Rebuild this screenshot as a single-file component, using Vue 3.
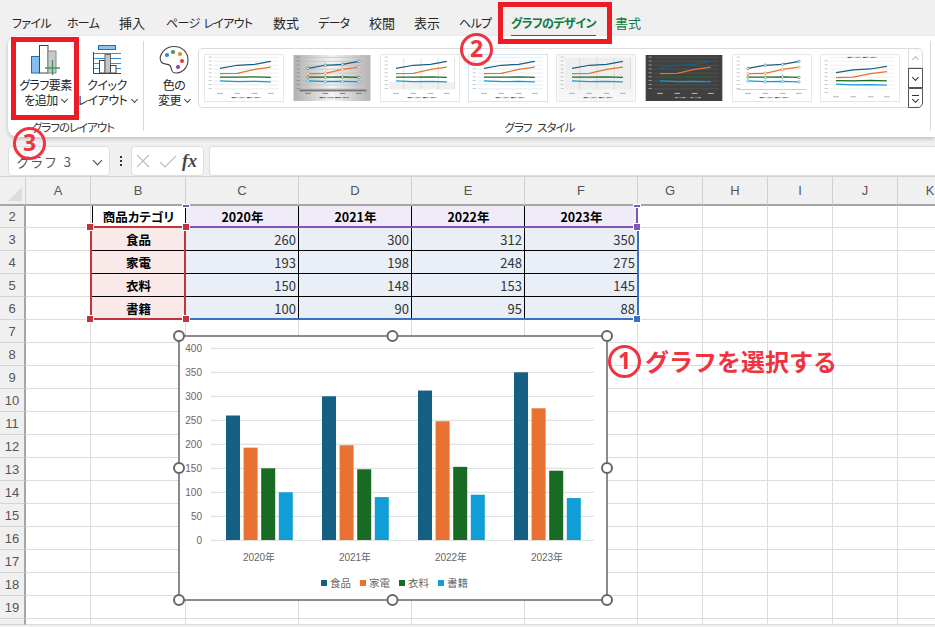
<template>
  <div class="app">
    <nav class="tabs">
      <span v-for="t in tabs" :key="t" class="tab" :class="{ active: t === 'グラフのデザイン', green: t === '書式', kana: isKana(t) }">{{ t }}</span>
    </nav>

    <section class="ribbon">
      <div class="group layout-group">
        <div class="btn-row">
          <button class="rb add-btn">
            <svg class="rb-icon" width="32" height="32" viewBox="33 43 32 32">
              <rect x="34.5" y="56.5" width="8" height="16.5" fill="#85bdec" stroke="#1f6fb5" />
              <rect x="42.5" y="45.5" width="8.5" height="27.5" fill="#fff" stroke="#444" />
              <rect x="51" y="51" width="8" height="22" fill="#c8c8c8" stroke="#888" />
              <path d="M55.5 60v15M48 68h15" stroke="#3f9a58" stroke-width="1.4" fill="none" />
            </svg>
            <span>グラフ要素</span>
            <span>を追加 <i class="caret"></i></span>
          </button>
          <button class="rb quick-btn">
            <svg class="rb-icon" width="30" height="32" viewBox="91 43 30 32">
              <rect x="97.5" y="45.5" width="17" height="4" fill="#8fc3ee" stroke="#1f6fb5" />
              <path d="M92 53.5h28M92 58.5h28M92 63.5h28M92 68.5h28" stroke="#2f8fdc" fill="none" />
              <rect x="98.5" y="60.5" width="5.5" height="12.5" fill="#fff" stroke="#444" />
              <rect x="104" y="54.5" width="5.5" height="18.5" fill="#c4c4c4" stroke="#666" />
              <rect x="109.5" y="65.5" width="5.5" height="7.5" fill="#fff" stroke="#444" />
              <path d="M92.5 52v21.5H120" stroke="#444" fill="none" />
            </svg>
            <span>クイック</span>
            <span>レイアウト <i class="caret"></i></span>
          </button>
        </div>
        <div class="group-label">グラフのレイアウト</div>
      </div>

      <div class="group style-group">
        <div class="btn-row">
          <button class="rb color-btn">
            <svg class="rb-icon" width="32" height="32" viewBox="158 43 32 32">
              <path d="M174 46.5C183 46.5 188 53 188 60C188 68 182 73 176 73C170 73 172.500 68 170 65.500C167.500 63 163 65.500 161 61.500C158 55 165 46.500 174 46.500Z" fill="#fff" stroke="#444" stroke-width="1.1" />
              <circle cx="167" cy="55" r="2.100" fill="#2b88d8" />
              <circle cx="173" cy="52" r="2.100" fill="#3f9a58" />
              <circle cx="180" cy="54" r="2.100" fill="#e98a1f" />
              <circle cx="182" cy="61" r="2.100" fill="#e0403a" />
              <circle cx="178" cy="67" r="2.100" fill="#8a44ad" />
            </svg>
            <span>色の</span>
            <span>変更 <i class="caret"></i></span>
          </button>
          <div class="gallery">
            <svg v-for="(th, i) in thumbs" :key="i" class="thumb" :class="th.kind" width="80" height="48" viewBox="0 0 80 48">
              <defs>
                <linearGradient :id="'g' + i" x1="0" y1="0" x2="1" y2="0">
                  <stop offset="0" stop-color="#b0b0b0" />
                  <stop offset="0.5" stop-color="#f4f4f4" />
                  <stop offset="1" stop-color="#b4b4b4" />
                </linearGradient>
                <pattern :id="'h' + i" width="3" height="3" patternUnits="userSpaceOnUse">
                  <path d="M0 3L3 0" stroke="#cfcfcf" stroke-width="0.600" />
                </pattern>
              </defs>
              <rect width="80" height="48" :fill="th.bg" />
              <rect v-if="th.kind === 'gradient'" width="80" height="48" :fill="'url(#g' + i + ')'" />
              <rect v-if="th.kind === 'hatch'" x="8" y="3" width="68" height="33" :fill="'url(#h' + i + ')'" />
              <rect v-if="th.kind === 'soft'" x="8" y="28" width="68" height="8" fill="#f0f0f0" />
              <template v-if="th.kind !== 'labels'">
                <line v-for="y in th.grid" :key="y" x1="8" x2="76" :y1="y" :y2="y" :stroke="th.gridColor" stroke-width="0.700" />
              </template>
              <line v-if="th.kind === 'labels'" x1="4" x2="76" y1="36" y2="36" stroke="#ccc" />
              <rect v-if="th.kind === 'gradient'" x="6" y="36" width="70" height="2" fill="#777" />
              <template v-if="th.kind === 'soft' || th.kind === 'hatch'">
                <line v-for="x in thumbX" :key="x" :x1="x + 8" :x2="x + 8" y1="3" y2="36" stroke="#ccc" stroke-width="0.600" />
              </template>
              <polyline v-for="l in th.lines" :key="l.color" :points="l.points" :stroke="l.color" fill="none" stroke-width="1.300" />
              <template v-if="th.markers">
                <template v-for="l in th.lines" :key="l.color">
                  <circle v-for="p in l.pts" :key="p[0]" :cx="p[0]" :cy="p[1]" r="1.300" fill="#fff" :stroke="l.color" stroke-width="0.600" />
                </template>
              </template>
              <rect v-for="x in thumbX" :key="x" :x="x - 3 + th.dx" :y="th.top ? 43 : 39.500" width="6" height="1.200" :fill="th.tick" />
              <rect v-for="k in 9" :key="k" x="3" :y="1.800 + (k - 1) * 4.100 + th.dy" width="3.500" height="0.800" :fill="th.tick" />
              <g v-for="(c, k) in seriesColors" :key="c">
                <rect :x="27 + k * 8" :y="th.top ? 2 : 44" width="4" height="1" :fill="c" />
                <rect :x="31 + k * 8" :y="th.top ? 1.800 : 43.800" width="2.500" height="1.200" :fill="th.tick" />
              </g>
            </svg>
            <div class="scroll">
              <span class="sc up"><i class="chev"></i></span>
              <span class="sc dark"><i class="chev"></i></span>
              <span class="sc dark more"><i class="bar"></i><i class="chev"></i></span>
            </div>
          </div>
        </div>
        <div class="group-label">グラフ スタイル</div>
      </div>
      <div class="end-line"></div>
    </section>

    <div class="formula-bar">
      <div class="name-box"><span>グラフ 3</span><i class="chev big"></i></div>
      <div class="dots"><i></i><i></i><i></i></div>
      <div class="fx-box">
        <svg width="48" height="20" viewBox="0 0 48 20">
          <path d="M3 4L15 16M15 4L3 16M26 11L31 16L42 5" stroke="#bdbdbd" stroke-width="1.100" fill="none" />
        </svg>
        <em>fx</em>
      </div>
      <div class="input"></div>
    </div>

    <main class="sheet">
      <div class="grid">
        <div class="head corner"><i></i></div>
        <div v-for="c in columns" :key="c" class="head">{{ c }}</div>
        <template v-for="row in rows" :key="row.n">
          <div class="row-no">{{ row.n }}</div>
          <div v-for="cell in row.cells" :key="cell.key" class="cell" :class="cell.cls">{{ cell.text }}</div>
        </template>
      </div>

      <div class="range red-range"></div>
      <div class="range purple-range"></div>
      <div class="range blue-range"></div>
      <i class="hd red h1"></i><i class="hd red h2"></i><i class="hd red h3"></i><i class="hd red h4"></i>
      <i class="hd purple h5"></i><i class="hd purple h6"></i><i class="hd purple h7"></i><i class="hd blue h8"></i>

      <svg class="chart" width="446" height="283" viewBox="170 327 446 283">
        <rect x="179" y="336" width="428" height="264" fill="#fff" stroke="#666" stroke-width="1.500" />
        <g v-for="t in ticks" :key="t">
          <line x1="211" x2="594" :y1="yOf(t)" :y2="yOf(t)" stroke="#d9d9d9" />
          <text class="tick" x="202" :y="yOf(t) + 3.500" text-anchor="end">{{ t }}</text>
        </g>
        <g v-for="(yr, yi) in years" :key="yr">
          <rect v-for="(s, si) in series" :key="s.name"
            :x="226 + yi * 96 + si * 17.600" :y="yOf(s.values[yi])" width="14"
            :height="540 - yOf(s.values[yi])" :fill="s.color" />
          <text class="cat" :x="259 + yi * 96" y="561" text-anchor="middle">{{ yr }}</text>
        </g>
        <g v-for="(s, si) in series" :key="s.name + 'l'">
          <rect :x="321 + si * 39" y="580" width="6" height="6" :fill="s.color" />
          <text class="leg" :x="330 + si * 39" y="587">{{ s.name }}</text>
        </g>
        <circle v-for="(h, i) in handles" :key="i" :cx="h[0]" :cy="h[1]" r="5" fill="#fff" stroke="#666" stroke-width="2" />
      </svg>
    </main>

    <div class="frame frame-add"></div>
    <div class="frame frame-tab"></div>
    <div class="num n1">1</div>
    <div class="num n2">2</div>
    <div class="num n3">3</div>
    <div class="note">グラフを選択する</div>
  </div>
</template>

<script setup>
const tabs = ['ファイル', 'ホーム', '挿入', 'ページ レイアウト', '数式', 'データ', '校閲', '表示', 'ヘルプ', 'グラフのデザイン', '書式']
const isKana = t => /[ァ-ヶー]/.test(t)
const columns = ['A', 'B', 'C', 'D', 'E', 'F', 'G', 'H', 'I', 'J', 'K']
const years = ['2020年', '2021年', '2022年', '2023年']
const series = [
  { name: '食品', color: '#156082', values: [260, 300, 312, 350] },
  { name: '家電', color: '#e97132', values: [193, 198, 248, 275] },
  { name: '衣料', color: '#196b24', values: [150, 148, 153, 145] },
  { name: '書籍', color: '#0f9ed5', values: [100, 90, 95, 88] }
]
const seriesColors = series.map(s => s.color)
const ticks = [400, 350, 300, 250, 200, 150, 100, 50, 0]
const yOf = v => 540.3 - v * 0.48

const handles = [[179, 336], [392.5, 336], [607, 336], [179, 468], [607, 468], [179, 600], [392.5, 600], [607, 600]]

// small preview charts in the style gallery
const thumbX = [15, 33, 51, 68]
const makeLines = (base = 35.3, scale = 0.082) =>
  series.map(s => {
    const pts = s.values.map((v, i) => [thumbX[i], +(base - v * scale).toFixed(1)])
    return { color: s.color, pts, points: pts.map(p => p.join(',')).join(' ') }
  })
const gridLines = Array.from({ length: 9 }, (_, i) => 2.5 + i * 4.1)

const thumb = (kind, bg, gridColor, extra = {}) => ({
  kind, bg, gridColor, grid: gridLines, lines: makeLines(extra.base, extra.scale),
  tick: '#bbb', markers: false, top: false, dx: 0, dy: 0, ...extra
})
const thumbs = [
  thumb('plain', '#fff', '#e4e4e4'),
  thumb('gradient', '#ddd', '#bdbdbd', { markers: true, tick: '#888' }),
  thumb('soft', '#fff', 'transparent'),
  thumb('blue', '#fff', '#d6e6f6'),
  thumb('hatch', '#f6f6f6', 'transparent'),
  thumb('dark', '#404040', '#585858', { tick: '#aaa' }),
  thumb('labels', '#fff', 'transparent', { markers: true }),
  thumb('top', '#fff', '#e8e8e8', { top: true, base: 38, scale: 0.075, dy: 4 })
]

// spreadsheet rows: row 2 is the header of the table, 3 to 6 the data
const rowNumbers = [2, 3, 4, 5, 6, 7, 8, 9, 10, 11, 12, 13, 14, 15, 16, 17, 18, 19, '']
const rows = rowNumbers.map(n => {
  const cells = []
  for (let c = 0; c < columns.length; c++) {
    let text = ''
    const cls = []
    if (n === 2 && c === 1) {
      text = '商品カテゴリ'
      cls.push('th', 'inner')
    } else if (n === 2 && c >= 2 && c <= 5) {
      text = years[c - 2]
      cls.push('th', 'th-year', 'inner')
    } else if (typeof n === 'number' && n >= 3 && n <= 6) {
      if (c === 1) {
        text = series[n - 3].name
        cls.push('th', 'th-row', 'inner', 'line')
      } else if (c >= 2 && c <= 5) {
        text = series[n - 3].values[c - 2]
        cls.push('num-cell', 'inner', 'line')
      }
    }
    cells.push({ key: n + '-' + c, text, cls })
  }
  return { n, cells }
})
</script>

<style>
html, body { margin: 0; background: #f0f0f0; }
</style>

<style scoped>
.app {
  position: relative;
  width: 935px;
  height: 627px;
  overflow: hidden;
  background: #f0f0f0;
  font-family: "Noto Sans CJK JP", "Noto Sans", sans-serif;
  font-feature-settings: "palt";
  color: #262626;
}

/* tab row */
.tabs {
  height: 36px;
  display: grid;
  grid-template-columns: 55px 52px 47px 107px 45px 51px 45px 45px 52px 104px auto;
  justify-items: start;
  align-items: center;
  padding: 9px 0 0 12px;
  box-sizing: border-box;
}
.tab {
  font-size: 13px;
  line-height: 18px;
  position: relative;
  white-space: nowrap;
}
.tab.kana {
  font-size: 12px;
  letter-spacing: -0.7px;
  word-spacing: 2px;
}
.tab.active, .tab.green { color: #0f7b41; }
.tab.active { font-weight: 700; letter-spacing: -0.6px; }
.tab.active::after {
  content: "";
  position: absolute;
  left: 0;
  right: 0;
  bottom: -5px;
  height: 2px;
  background: #0f7b41;
}

/* ribbon */
.ribbon {
  height: 101px;
  margin-left: 8px;
  display: flex;
  background: #fff;
  border-radius: 9px 0 0 9px;
  box-shadow: 0 2px 4px rgba(0, 0, 0, 0.2);
  position: relative;
}
.group {
  display: flex;
  flex-direction: column;
  position: relative;
}
.layout-group { width: 136px; }
.layout-group::after {
  content: "";
  position: absolute;
  right: 0;
  top: 5px;
  bottom: 6px;
  width: 1px;
  background: #d8d8d8;
}
.style-group { flex: 1; }
.btn-row {
  display: flex;
  height: 83px;
}
.group-label {
  font-size: 11.500px;
  line-height: 16px;
  text-align: center;
  color: #333;
  letter-spacing: -1px;
  word-spacing: 4px;
}
.layout-group .group-label { padding-right: 6px; }
.rb {
  border: 0;
  background: none;
  padding: 7px 0 0;
  margin: 0;
  font: inherit;
  font-size: 12px;
  line-height: 14.500px;
  letter-spacing: -0.5px;
  color: #262626;
  display: flex;
  flex-direction: column;
  align-items: center;
  white-space: nowrap;
}
.rb-icon { margin-bottom: 3px; }
.add-btn { width: 67px; margin-left: 4px; }
.quick-btn { width: 56px; }
.color-btn { width: 54px; padding-left: 6px; }
.caret {
  display: inline-block;
  width: 4px;
  height: 4px;
  margin: 0 0 3px 2px;
  border-right: 1px solid #444;
  border-bottom: 1px solid #444;
  transform: rotate(45deg);
}
.gallery {
  margin-top: 12px;
  height: 60px;
  width: 721px;
  box-sizing: border-box;
  border: 1px solid #dcdcdc;
  border-right: 0;
  border-radius: 5px;
  display: flex;
  align-items: center;
  gap: 8px;
  padding-left: 5px;
}
.thumb {
  flex: none;
  box-sizing: border-box;
  border: 1px solid #e6e6e6;
}
.thumb.blue { border-color: #d4e4f5; }
.thumb.gradient, .thumb.dark { border-color: transparent; }
.scroll {
  width: 15px;
  height: 60px;
  margin-left: auto;
  display: flex;
  flex-direction: column;
  flex: none;
}
.sc {
  flex: 1;
  box-sizing: border-box;
  border: 1px solid #dcdcdc;
  display: flex;
  flex-direction: column;
  align-items: center;
  justify-content: center;
}
.sc.up { border-radius: 0 5px 0 0; }
.sc.up .chev { transform: rotate(225deg); border-color: #bbb; margin-top: 2px; }
.sc.dark { border: 1px solid #555; }
.sc.more { border-radius: 0 0 5px 0; }
.chev {
  display: block;
  width: 4px;
  height: 4px;
  border-right: 1.5px solid #333;
  border-bottom: 1.5px solid #333;
  transform: rotate(45deg);
  margin-top: -2px;
}
.chev.big { width: 6px; height: 6px; border-color: #444; }
.bar {
  width: 7px;
  height: 1px;
  background: #333;
  margin-bottom: 3px;
}
.end-line {
  position: absolute;
  left: 922px;
  top: 5px;
  bottom: 6px;
  width: 1px;
  background: #d8d8d8;
}

/* formula bar */
.formula-bar {
  height: 39px;
  box-sizing: border-box;
  padding: 9px 0 0 8px;
  display: flex;
  align-items: stretch;
}
.name-box, .fx-box, .input {
  background: #fff;
  border: 1px solid #dedede;
  border-radius: 4px;
  box-sizing: border-box;
}
.name-box {
  width: 102px;
  display: flex;
  align-items: center;
  justify-content: space-between;
  padding: 0 8px;
  font-size: 13px;
  letter-spacing: 2.5px;
  color: #555;
}
.dots {
  width: 21px;
  display: flex;
  flex-direction: column;
  align-items: center;
  justify-content: center;
  gap: 2px;
}
.dots i {
  width: 2px;
  height: 2px;
  background: #333;
}
.fx-box {
  width: 73px;
  display: flex;
  align-items: center;
  padding-left: 2px;
}
.fx-box em {
  font-family: "Liberation Serif", serif;
  font-size: 18px;
  font-weight: 700;
  color: #444;
}
.input {
  flex: 1;
  margin-left: 5px;
  border-right: 0;
  border-radius: 4px 0 0 4px;
}

/* sheet */
.sheet {
  position: relative;
  height: 451px;
}
.grid {
  display: grid;
  grid-template-columns: 26px 65px 95px 113px 113px 113px 113px 65px 65px 65px 65px 65px;
  grid-template-rows: 30px 22px repeat(17, 23px) 6px;
  background: #fff;
}
.head {
  background: #f0f0f0;
  border-top: 1px solid #d4d4d4;
  border-right: 1px solid #d0d0d0;
  border-bottom: 2px solid #a6a6a6;
  box-sizing: border-box;
  font-family: "Liberation Sans", sans-serif;
  font-size: 13px;
  color: #555;
  display: flex;
  align-items: center;
  justify-content: center;
}
.corner { position: relative; }
.corner i {
  position: absolute;
  right: 3px;
  bottom: 3px;
  border-left: 14px solid transparent;
  border-bottom: 14px solid #dcdcdc;
}
.row-no {
  background: #f0f0f0;
  border-right: 2px solid #a6a6a6;
  border-bottom: 1px solid #d4d4d4;
  box-sizing: border-box;
  font-family: "Liberation Sans", sans-serif;
  font-size: 13px;
  color: #555;
  display: flex;
  align-items: center;
  justify-content: center;
}
.cell {
  border-right: 1px solid #dcdcdc;
  border-bottom: 1px solid #dcdcdc;
  box-sizing: border-box;
  font-size: 12.500px;
  color: #000;
  display: flex;
  align-items: center;
  min-width: 0;
  overflow: hidden;
}
.cell.inner { border-right-color: #000; }
.cell.line { border-bottom-color: #000; }
.th {
  font-weight: 700;
  justify-content: center;
  border-left: 1px solid transparent;
}
.th:not(.th-year):not(.th-row) { box-shadow: inset 1px 0 0 #000; }
.th-year { background: #f0ecf7; }
.th-row { background: #f9e9e9; }
.num-cell {
  background: #e9eef7;
  justify-content: flex-end;
  padding-right: 2px;
  color: #333;
  font-size: 13px;
}
.range {
  position: absolute;
  box-sizing: border-box;
  pointer-events: none;
}
.red-range {
  left: 90px;
  top: 50px;
  width: 96px;
  height: 94px;
  border: 2px solid #c0343c;
}
.purple-range {
  left: 185px;
  top: 29px;
  width: 453px;
  height: 23px;
  border-right: 2px solid #7f56b8;
  border-bottom: 2px solid #7f56b8;
}
.blue-range {
  left: 186px;
  top: 54px;
  width: 453px;
  height: 90px;
  border-right: 2px solid #3d6fc4;
  border-bottom: 2px solid #3d6fc4;
}
.hd {
  position: absolute;
  width: 6px;
  height: 6px;
  outline: 1px solid #fff;
}
.hd.red { background: #c0343c; }
.hd.purple { background: #7f56b8; }
.hd.blue { background: #3d6fc4; }
.h1 { left: 87px; top: 48px; }
.h2 { left: 183px; top: 48px; }
.h3 { left: 87px; top: 140px; }
.h4 { left: 183px; top: 140px; }
.h5 { left: 634px; top: 48px; }
.h6 { left: 183px; top: 29px; height: 2px; }
.h7 { left: 634px; top: 29px; height: 2px; }
.h8 { left: 634px; top: 140px; }
.chart {
  position: absolute;
  left: 170px;
  top: 151px;
  overflow: visible;
}
.tick, .cat {
  font-family: "Liberation Sans", sans-serif;
  font-size: 10px;
  fill: #666;
}
.cat { font-family: "Liberation Sans", "Noto Sans CJK JP", sans-serif; }
.leg {
  font-family: "Noto Sans CJK JP", sans-serif;
  font-size: 10.500px;
  fill: #666;
}

/* red annotations on top of the screenshot */
.frame {
  position: absolute;
  box-sizing: border-box;
  border: 5px solid #ed1c24;
}
.frame-add { left: 11px; top: 37px; width: 68px; height: 83px; }
.frame-tab { left: 498px; top: 2px; width: 114px; height: 42px; }
.num {
  position: absolute;
  width: 33px;
  height: 33px;
  box-sizing: border-box;
  border: 3.500px solid #ef3340;
  border-radius: 50%;
  color: #ef3340;
  font-size: 23px;
  font-weight: 700;
  line-height: 25px;
  text-align: center;
  font-family: "Noto Sans", sans-serif;
}
.n1 { left: 608px; top: 345px; }
.n2 { left: 460px; top: 33px; }
.n3 { left: 13px; top: 127px; }
.note {
  position: absolute;
  left: 645px;
  top: 344px;
  font-size: 24px;
  line-height: 34px;
  font-weight: 700;
  color: #ef3340;
  font-feature-settings: normal;
  white-space: nowrap;
}
</style>
